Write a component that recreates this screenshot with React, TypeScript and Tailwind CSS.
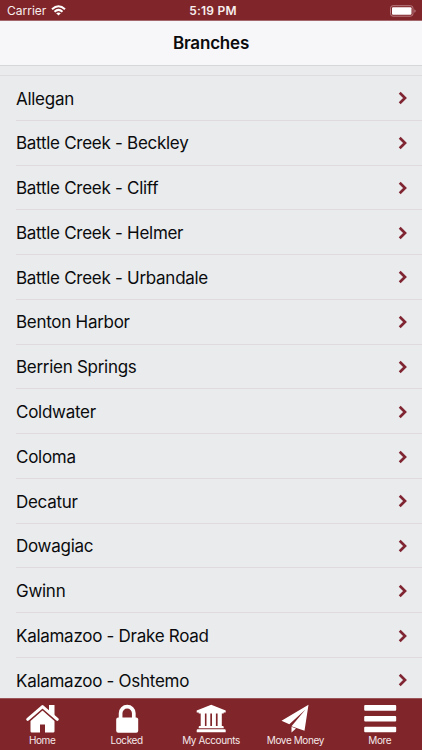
import type { ReactNode } from 'react'

const branches = [
  'Allegan',
  'Battle Creek - Beckley',
  'Battle Creek - Cliff',
  'Battle Creek - Helmer',
  'Battle Creek - Urbandale',
  'Benton Harbor',
  'Berrien Springs',
  'Coldwater',
  'Coloma',
  'Decatur',
  'Dowagiac',
  'Gwinn',
  'Kalamazoo - Drake Road',
  'Kalamazoo - Oshtemo',
]

const tabs: { label: string; icon: ReactNode }[] = [
  {
    label: 'Home',
    icon: (
      <>
        <path d="M6.500 17 18.500 6.500 30.500 17V27.300Q30.500 28.500 29.300 28.500H21V20.500H16V28.500H7.700Q6.500 28.500 6.500 27.300Z" />
        <path d="M3 15.800 18.500 2.600 34 15.800" fill="none" stroke="#802529" strokeWidth="5" />
        <path d="M25 1H30.500V12L25 7Z" />
        <path d="M3.700 15.300 18.500 2.600 33.300 15.300" fill="none" stroke="currentColor" strokeWidth="3" strokeLinecap="round" strokeLinejoin="round" />
      </>
    ),
  },
  {
    label: 'Locked',
    icon: (
      <>
        <path d="M11.600 15V9.300a6.600 6.600 0 0 1 13.200 0V15" fill="none" stroke="currentColor" strokeWidth="3.700" />
        <rect x="7.200" y="13.500" width="22" height="15.200" rx="2" />
      </>
    ),
  },
  {
    label: 'My Accounts',
    icon: (
      <>
        <path d="M18.200 .8 32.700 6.500V8.500H30.700V9.500H5.700V8.500H3.700V6.500Z" />
        <path d="M7.700 9H11.900V22.500H7.700ZM13.500 9H17.300V22.500H13.500ZM19 9H22.900V22.500H19ZM24.600 9H28.800V22.500H24.600Z" />
        <path d="M6.500 22H29.700Q30.700 22 30.700 23V24.200H5.700V23Q5.700 22 6.500 22ZM4.700 25.300H31.700Q32.700 25.300 32.700 26.300V28.300H3.700V26.300Q3.700 25.300 4.700 25.300Z" />
      </>
    ),
  },
  {
    label: 'Move Money',
    icon: (
      <>
        <path d="M31.500 .8 4.500 16.800 12.300 20.300 28.500 5.500 14.500 22.300 27.500 26.800Z" />
        <path d="M14.500 22.800V28.500L19 24.400Z" />
      </>
    ),
  },
  {
    label: 'More',
    icon: (
      <>
        <rect x="2.200" y="1" width="32" height="5.700" rx="1" />
        <rect x="2.200" y="12" width="32" height="5.500" rx="1" />
        <rect x="2.200" y="22.800" width="32" height="5.500" rx="1" />
      </>
    ),
  },
]

function StatusBar() {
  return (
    <div className="grid h-[21px] shrink-0 grid-cols-3 items-center border-b border-[#a4676c] bg-[#802529] pl-[7px] pr-[6px] text-[#f8eeee]">
      <div className="flex items-center gap-[5px]">
        <span className="pt-px text-[12px] leading-5">Carrier</span>
        <svg width="15" height="11" viewBox="0 0 15 11" fill="none" stroke="white" strokeWidth="2">
          <path d="M1 4.200Q7.500-1.800 14 4.200M3.500 6.700Q7.500 3.100 11.500 6.700" />
          <path d="M5.200 8.300Q7.500 6.500 9.800 8.300L7.500 10.600Z" fill="white" stroke="none" />
        </svg>
      </div>
      <span className="pl-[3px] pt-px text-center text-[12px] font-semibold leading-5 tracking-[0.2px]">5:19 PM</span>
      <svg className="justify-self-end" width="26" height="12" viewBox="0 0 26 12">
        <rect x=".5" y=".7" width="22.500" height="10.500" rx="2.500" fill="none" stroke="#b87b80" />
        <rect x="2" y="2.200" width="19.500" height="7.500" rx="1" fill="white" />
        <path d="M24.300 4.200Q25.700 4.700 25.700 6T24.300 7.800Z" fill="#b87b80" />
      </svg>
    </div>
  )
}

function BranchRow({ name }: { name: string }) {
  return (
    <li className="flex h-[44.77px] shrink-0 items-center justify-between border-b border-[#dfdadd] pr-[14px]">
      <span className="pt-[3px] text-[17px] tracking-[-0.28px]">{name}</span>
      <svg className="mt-px" width="10" height="14" viewBox="0 0 10 14" fill="none" stroke="#802532" strokeWidth="2.700">
        <path d="M1.700 1.800 7 7 1.700 12.200" />
      </svg>
    </li>
  )
}

export default function App() {
  return (
    <div className="flex h-[750px] w-[422px] flex-col overflow-hidden bg-[#e9ebed] font-['Inter','Liberation_Sans',sans-serif] text-[#0b0b0d]">
      <StatusBar />
      <header className="flex h-[45px] shrink-0 items-center justify-center border-b border-[#d6d7d9] bg-[#f7f7f9]">
        <h1 className="pt-[2px] text-[17px] font-semibold tracking-[-0.2px]">Branches</h1>
      </header>
      <div className="h-[10px] shrink-0 border-b border-[#dfdcdf]" />
      <ul className="flex min-h-0 flex-1 flex-col overflow-hidden pl-4">
        {branches.map((name) => (
          <BranchRow key={name} name={name} />
        ))}
      </ul>
      <nav className="grid h-[52px] shrink-0 grid-cols-5 border-t border-[#9b5559] bg-[#802529] text-white">
        {tabs.map((tab) => (
          <div key={tab.label} className="flex flex-col items-center pt-[5px]">
            <svg width="36" height="30" viewBox="0 0 36 30" fill="currentColor">
              {tab.icon}
            </svg>
            <span className="whitespace-nowrap text-[10px] leading-3 tracking-[-0.4px] text-[#f5e8e9]">{tab.label}</span>
          </div>
        ))}
      </nav>
    </div>
  )
}
